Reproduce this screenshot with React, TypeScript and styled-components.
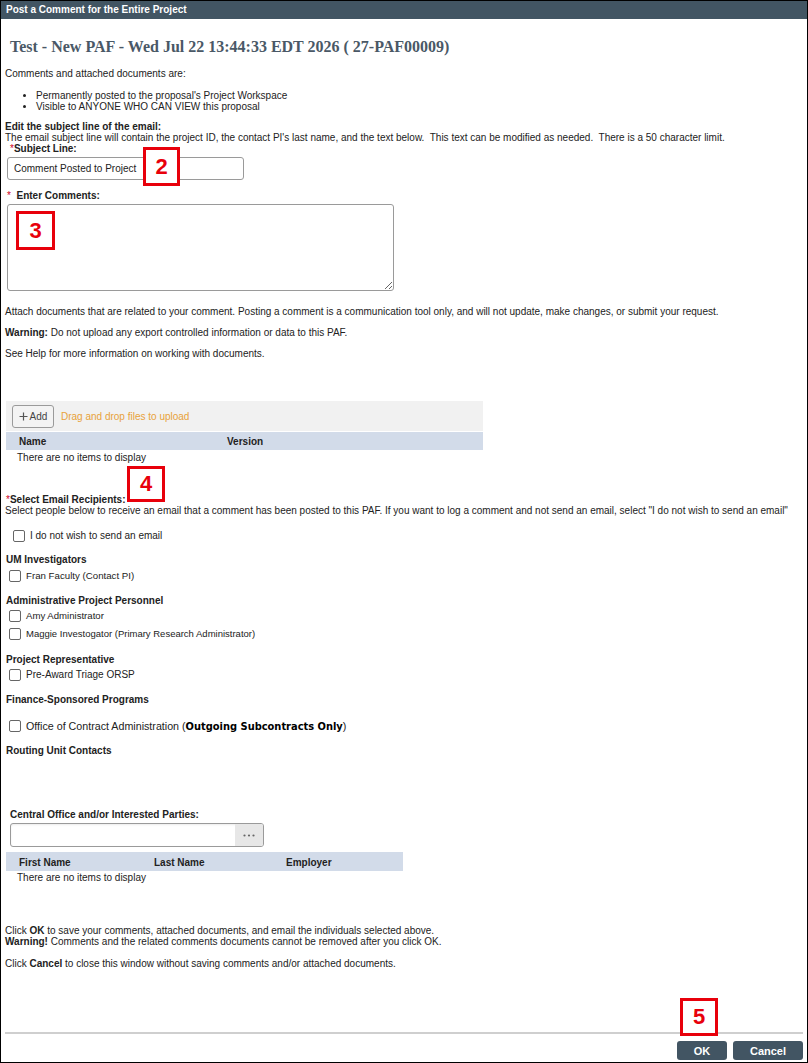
import styled, { createGlobalStyle } from 'styled-components'

const GlobalStyle = createGlobalStyle`
  body {
    margin: 0;
    background: #fff;
    font-family: 'Liberation Sans', Arial, sans-serif;
  }
`

const SANS = `'Liberation Sans', Arial, sans-serif`

// step markers laid over the form
const markers = [
  { n: 2, x: 143, y: 147, w: 37, h: 39 },
  { n: 3, x: 16, y: 211, w: 39, h: 39 },
  { n: 4, x: 127, y: 466, w: 38, h: 36 },
  { n: 5, x: 680, y: 998, w: 38, h: 38 },
]

const recipientGroups = [
  { title: 'UM Investigators', mt: 12, people: [{ name: 'Fran Faculty (Contact PI)', mt: 4, size: 9.7 }] },
  {
    title: 'Administrative Project Personnel',
    mt: 13,
    people: [
      { name: 'Amy Administrator', mt: 3, size: 9.6 },
      { name: 'Maggie Investogator (Primary Research Administrator)', mt: 5, size: 9.5 },
    ],
  },
  { title: 'Project Representative', mt: 14, people: [{ name: 'Pre-Award Triage ORSP', mt: 3, size: 10 }] },
]

export default function App() {
  return (
    <>
      <GlobalStyle />
      <Frame>
        <TitleBar>Post a Comment for the Entire Project</TitleBar>
        <Body>
          <Heading>Test - New PAF - Wed Jul 22 13:44:33 EDT 2026 ( 27-PAF00009)</Heading>

          <Line $mt={11}>Comments and attached documents are:</Line>
          <Bullets>
            <li>Permanently posted to the proposal's Project Workspace</li>
            <li>Visible to ANYONE WHO CAN VIEW this proposal</li>
          </Bullets>

          <Line $mt={9}>
            <b>Edit the subject line of the email:</b>
          </Line>
          <Line>
            The email subject line will contain the project ID, the contact PI's last name, and the text below.&nbsp; This
            text can be modified as needed.&nbsp; There is a 50 character limit.
          </Line>
          <Line $indent={5}>
            <Req>*</Req>
            <b>Subject Line:</b>
          </Line>
          <TextInput defaultValue="Comment Posted to Project" />

          <Line $mt={10} $indent={2}>
            <Req>*</Req>&nbsp; <b>Enter Comments:</b>
          </Line>
          <CommentBox />

          <Line $mt={15}>
            Attach documents that are related to your comment. Posting a comment is a communication tool only, and will
            not update, make changes, or submit your request.
          </Line>
          <Line $mt={10}>
            <b>Warning:</b> Do not upload any export controlled information or data to this PAF.
          </Line>
          <Line $mt={10}>See Help for more information on working with documents.</Line>

          <UploadBar>
            <AddButton>
              <svg width="9" height="9" viewBox="0 0 9 9">
                <path d="M4.5 0.5v8M0.5 4.5h8" stroke="#555" strokeWidth="1.2" />
              </svg>
              Add
            </AddButton>
            <DropHint>Drag and drop files to upload</DropHint>
          </UploadBar>
          <GridHead $cols="208px 1fr" $width={477} $h={18}>
            <span>Name</span>
            <span>Version</span>
          </GridHead>
          <Empty $mt={2}>There are no items to display</Empty>

          <Line $mt={31} $indent={1}>
            <Req>*</Req>
            <b>Select Email Recipients:</b>
          </Line>
          <Line>
            Select people below to receive an email that a comment has been posted to this PAF. If you want to log a
            comment and not send an email, select "I do not wish to send an email"
          </Line>

          <CheckRow $mt={13} $indent={8}>
            <Box />I do not wish to send an email
          </CheckRow>

          {recipientGroups.map((g) => (
            <div key={g.title}>
              <GroupTitle $mt={g.mt}>{g.title}</GroupTitle>
              {g.people.map((p) => (
                <CheckRow key={p.name} $mt={p.mt} $indent={4} $size={p.size}>
                  <Box />
                  {p.name}
                </CheckRow>
              ))}
            </div>
          ))}

          <GroupTitle $mt={13}>Finance-Sponsored Programs</GroupTitle>
          <CheckRow $mt={14} $indent={4} $size={10.7}>
            <Box />
            <span>
              Office of Contract Administration (<Wide>Outgoing Subcontracts Only</Wide>)
            </span>
          </CheckRow>

          <GroupTitle $mt={13}>Routing Unit Contacts</GroupTitle>

          <GroupTitle $mt={53} $indent={5}>
            Central Office and/or Interested Parties:
          </GroupTitle>
          <Lookup>
            <LookupField />
            <LookupButton>
              <svg width="12" height="3" viewBox="0 0 12 3">
                <circle cx="1.5" cy="1.5" r="1.1" fill="#666" />
                <circle cx="6" cy="1.5" r="1.1" fill="#666" />
                <circle cx="10.5" cy="1.5" r="1.1" fill="#666" />
              </svg>
            </LookupButton>
          </Lookup>
          <GridHead $cols="135px 132px 1fr" $width={397} $h={19} $mt={5}>
            <span>First Name</span>
            <span>Last Name</span>
            <span>Employer</span>
          </GridHead>
          <Empty $mt={1}>There are no items to display</Empty>

          <Line $mt={42}>
            Click <b>OK</b> to save your comments, attached documents, and email the individuals selected above.
          </Line>
          <Line>
            <b>Warning!</b> Comments and the related comments documents cannot be removed after you click OK.
          </Line>
          <Line $mt={11}>
            Click <b>Cancel</b> to close this window without saving comments and/or attached documents.
          </Line>

          <Footer>
            <Divider />
            <ButtonRow>
              <ActionButton $w={50}>OK</ActionButton>
              <ActionButton $w={70}>Cancel</ActionButton>
            </ButtonRow>
          </Footer>
        </Body>

        {markers.map((m) => (
          <Marker key={m.n} $x={m.x} $y={m.y} $w={m.w} $h={m.h}>
            {m.n}
          </Marker>
        ))}
      </Frame>
    </>
  )
}

const Frame = styled.div`
  position: relative;
  width: 808px;
  height: 1063px;
  box-sizing: border-box;
  border: 1px solid #000;
  display: flex;
  flex-direction: column;
  color: #222;
  font-size: 10px;
  font-family: ${SANS};
`

const TitleBar = styled.div`
  height: 18px;
  line-height: 18px;
  padding-left: 5px;
  background: #425563;
  color: #fff;
  font-weight: bold;
  font-size: 10px;
`

const Body = styled.div`
  flex: 1;
  display: flex;
  flex-direction: column;
  padding: 0 4px;
`

const Heading = styled.h1`
  margin: 18px 0 0 5px;
  font: bold 16px/20px 'Liberation Serif', 'Times New Roman', serif;
  color: #4a5866;
`

const Line = styled.p<{ $mt?: number; $indent?: number }>`
  margin: ${(p) => p.$mt ?? 0}px 0 0 ${(p) => p.$indent ?? 0}px;
  line-height: 11px;
  white-space: nowrap;
`

const Req = styled.span`
  color: #d0021b;
`

const Bullets = styled.ul`
  margin: 11px 0 0;
  padding-left: 31px;
  line-height: 11px;
`

const TextInput = styled.input`
  display: block;
  margin: 3px 0 0 2px;
  width: 237px;
  height: 23px;
  box-sizing: border-box;
  padding: 0 6px;
  border: 1px solid #9a9a9a;
  border-radius: 3px;
  font: 10px ${SANS};
  color: #222;
`

const CommentBox = styled.textarea`
  display: block;
  margin: 3px 0 0 2px;
  width: 387px;
  height: 87px;
  box-sizing: border-box;
  border: 1px solid #9a9a9a;
  border-radius: 3px;
  font: 10px ${SANS};
`

const UploadBar = styled.div`
  margin: 42px 0 0 1px;
  width: 477px;
  height: 30px;
  box-sizing: border-box;
  padding: 4px 6px;
  background: #f1f1f1;
  display: flex;
  align-items: center;
  gap: 7px;
`

const AddButton = styled.button`
  height: 23px;
  width: 42px;
  padding: 0;
  display: flex;
  align-items: center;
  justify-content: center;
  gap: 2px;
  border: 1px solid #9a9a9a;
  border-radius: 3px;
  background: #f3f3f3;
  color: #444;
  font: 10px ${SANS};
`

const DropHint = styled.span`
  color: #e8a23a;
`

const GridHead = styled.div<{ $cols: string; $width: number; $h: number; $mt?: number }>`
  margin: ${(p) => p.$mt ?? 1}px 0 0 1px;
  width: ${(p) => p.$width}px;
  height: ${(p) => p.$h}px;
  box-sizing: border-box;
  padding: 1px 0 0 13px;
  display: grid;
  grid-template-columns: ${(p) => p.$cols};
  align-items: center;
  background: #d2dbe9;
  font-weight: bold;
`

const Empty = styled.div<{ $mt: number }>`
  margin: ${(p) => p.$mt}px 0 0 12px;
  line-height: 11px;
`

const CheckRow = styled.label<{ $mt: number; $indent: number; $size?: number }>`
  display: flex;
  align-items: center;
  gap: 5px;
  height: 13px;
  margin: ${(p) => p.$mt}px 0 0 ${(p) => p.$indent}px;
  font-size: ${(p) => p.$size ?? 10}px;
  white-space: nowrap;
`

const Box = styled.input.attrs({ type: 'checkbox' })`
  appearance: none;
  flex: none;
  margin: 0;
  width: 12px;
  height: 12px;
  box-sizing: border-box;
  border: 1px solid #666;
  border-radius: 2px;
  background: #fff;
`

const Wide = styled.b`
  font-family: 'DejaVu Sans', Verdana, sans-serif;
  font-size: 9.9px;
  color: #000;
`

const GroupTitle = styled.div<{ $mt: number; $indent?: number }>`
  margin: ${(p) => p.$mt}px 0 0 ${(p) => p.$indent ?? 1}px;
  line-height: 11px;
  font-weight: bold;
`

const Lookup = styled.div`
  margin: 3px 0 0 5px;
  width: 254px;
  height: 24px;
  box-sizing: border-box;
  display: flex;
  border: 1px solid #9a9a9a;
  border-radius: 3px;
  overflow: hidden;
  box-shadow: inset 0 1px 2px rgba(0, 0, 0, 0.08);
`

const LookupField = styled.div`
  flex: 1;
`

const LookupButton = styled.div`
  width: 28px;
  display: flex;
  align-items: center;
  justify-content: center;
  background: #e7e7e7;
`

const Footer = styled.div`
  margin-top: auto;
  padding-bottom: 2px;
`

const Divider = styled.div`
  height: 2px;
  background: #cfcfcf;
`

const ButtonRow = styled.div`
  display: flex;
  justify-content: flex-end;
  gap: 6px;
  margin-top: 7px;
`

const ActionButton = styled.button<{ $w: number }>`
  width: ${(p) => p.$w}px;
  height: 19px;
  padding: 0;
  border: 0;
  border-radius: 3px;
  background: #425563;
  color: #fff;
  font: bold 11px ${SANS};
`

const Marker = styled.div<{ $x: number; $y: number; $w: number; $h: number }>`
  position: absolute;
  left: ${(p) => p.$x - 1}px;
  top: ${(p) => p.$y - 1}px;
  width: ${(p) => p.$w}px;
  height: ${(p) => p.$h}px;
  box-sizing: border-box;
  border: 3px solid #e8000b;
  background: #fff;
  display: flex;
  align-items: center;
  justify-content: center;
  color: #e8000b;
  font: bold 22px ${SANS};
`
